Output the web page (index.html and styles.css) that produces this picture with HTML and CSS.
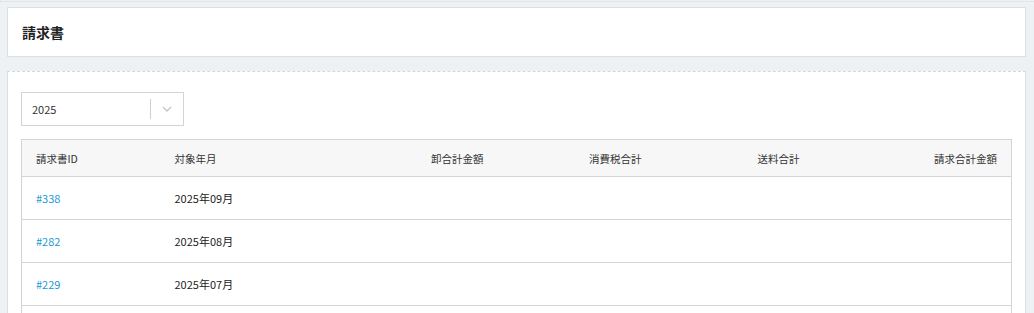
FILE: index.html
```html
<!DOCTYPE html>
<html lang="ja">
<head>
    <meta charset="UTF-8">
    <meta name="viewport" content="width=device-width, initial-scale=1.0">
    <title>請求書</title>
    <link rel="stylesheet" href="styles.css">
</head>
<body>
    <div class="page">
        <div class="card title-card">
            <h1>請求書</h1>
        </div>
        <div class="card list-card">
            <div class="select">
                <span class="select-value">2025</span>
                <span class="select-sep"></span>
                <span class="select-arrow">
                    <svg width="10" height="6" viewBox="0 0 10 6"><path d="M1 1l4 4 4-4" fill="none" stroke="#c4c4c4" stroke-width="1.3"/></svg>
                </span>
            </div>
            <table class="invoices">
                <colgroup>
                    <col class="c-id">
                    <col class="c-month">
                    <col class="c-amount">
                    <col class="c-tax">
                    <col class="c-ship">
                    <col class="c-total">
                </colgroup>
                <thead>
                    <tr>
                        <th>請求書ID</th>
                        <th>対象年月</th>
                        <th class="num">卸合計金額</th>
                        <th class="num">消費税合計</th>
                        <th class="num">送料合計</th>
                        <th class="num">請求合計金額</th>
                    </tr>
                </thead>
                <tbody>
                    <tr>
                        <td><a href="#">#338</a></td>
                        <td>2025年09月</td>
                        <td class="num"></td>
                        <td class="num"></td>
                        <td class="num"></td>
                        <td class="num"></td>
                    </tr>
                    <tr>
                        <td><a href="#">#282</a></td>
                        <td>2025年08月</td>
                        <td class="num"></td>
                        <td class="num"></td>
                        <td class="num"></td>
                        <td class="num"></td>
                    </tr>
                    <tr>
                        <td><a href="#">#229</a></td>
                        <td>2025年07月</td>
                        <td class="num"></td>
                        <td class="num"></td>
                        <td class="num"></td>
                        <td class="num"></td>
                    </tr>
                    <tr>
                        <td></td>
                        <td></td>
                        <td class="num"></td>
                        <td class="num"></td>
                        <td class="num"></td>
                        <td class="num"></td>
                    </tr>
                </tbody>
            </table>
        </div>
    </div>
</body>
</html>
```

FILE: styles.css
```css
body {
    margin: 0;
    padding: 0;
    background-color: #eef1f4;
    font-family: "Noto Sans CJK JP", "Noto Sans", sans-serif;
    color: #222;
    overflow: hidden;
}

.page {
    padding: 5px 8px 0 7px;
    border-top: 1px dotted #d6dbe0;
    margin-top: 1px;
}

.card {
    background-color: #fff;
    border: 1px solid #dcdfe3;
}

.title-card {
    height: 48px;
    display: flex;
    align-items: center;
    padding: 0 14px;
}

h1 {
    margin: 0;
    font-size: 14px;
    font-weight: bold;
    color: #222;
}

.list-card {
    margin-top: 14px;
    border-top: 1px dashed #d3d8dd;
    padding: 20px 14px 0 13px;
}

/* セレクトボックス */
.select {
    width: 161px;
    height: 32px;
    border: 1px solid #d4d4d4;
    display: flex;
    align-items: center;
    box-sizing: content-box;
}

.select-value {
    flex: 1;
    padding-left: 10px;
    font-size: 11px;
    color: #333;
}

.select-sep {
    width: 1px;
    height: 20px;
    background-color: #d0d0d0;
}

.select-arrow {
    width: 32px;
    display: flex;
    justify-content: center;
    align-items: center;
}

/* 一覧テーブル */
.invoices {
    margin-top: 13px;
    width: 990px;
    border-collapse: collapse;
    table-layout: fixed;
    font-size: 11px;
}

.c-id { width: 139px; }
.c-month { width: 179px; }
.c-amount { width: 158px; }
.c-tax { width: 158px; }
.c-ship { width: 158px; }
.c-total { width: 198px; }

.invoices th,
.invoices td {
    border: 1px solid #d4d4d4;
    border-left: none;
    border-right: none;
    padding: 0 14px;
    text-align: left;
    white-space: nowrap;
}

.invoices th:first-child,
.invoices td:first-child {
    border-left: 1px solid #d4d4d4;
}

.invoices th:last-child,
.invoices td:last-child {
    border-right: 1px solid #d4d4d4;
}

.invoices th {
    height: 36px;
    background-color: #f7f7f7;
    font-weight: normal;
    font-size: 10.5px;
    color: #333;
}

.invoices td {
    height: 42px;
}

.invoices .num {
    text-align: right;
}

.invoices a {
    color: #1a9ad6;
    text-decoration: none;
}
```
